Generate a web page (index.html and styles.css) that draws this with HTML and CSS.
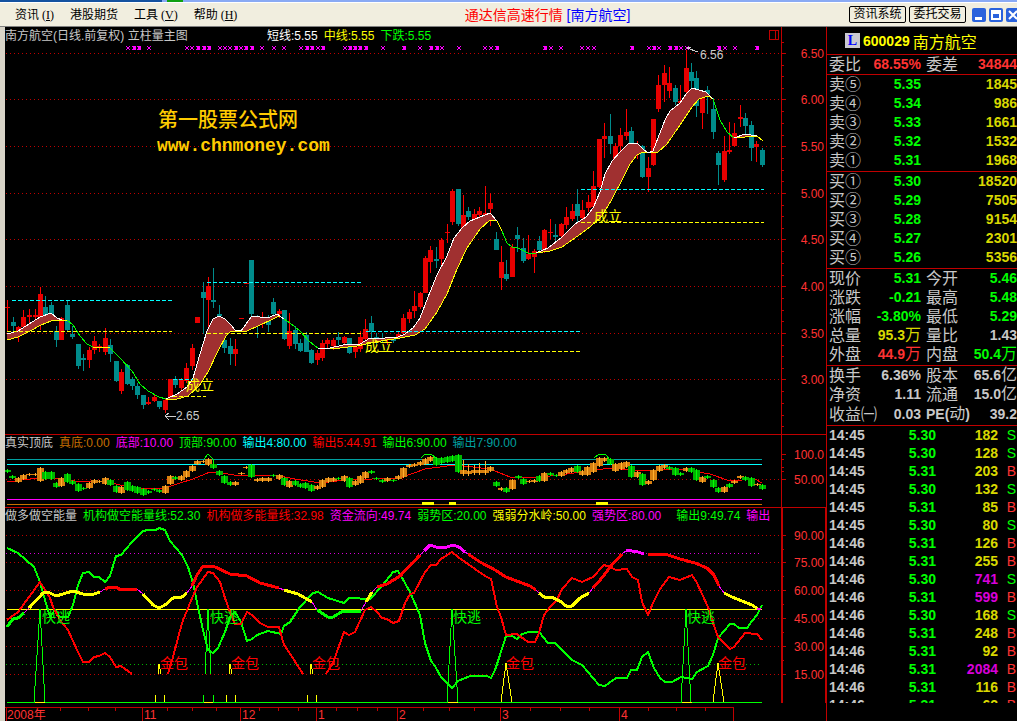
FILE: index.html
```html
<!DOCTYPE html>
<html lang="zh-CN">
<head>
<meta charset="utf-8">
<title>通达信高速行情[南方航空]</title>
<link rel="stylesheet" href="styles.css">
</head>
<body>
<header class="top">
  <div class="strip"><i class="strip-dark"></i><i class="strip-green"></i></div>
  <div class="bar">
    <nav class="menu">
      <button type="button">资讯 (<u>I</u>)</button>
      <button type="button">港股期货</button>
      <button type="button">工具 (<u>V</u>)</button>
      <button type="button">帮助 (<u>H</u>)</button>
    </nav>
    <h1 class="title"><span class="t-red">通达信高速行情</span> <span class="t-blue">[南方航空]</span></h1>
    <div class="actions">
      <button type="button" class="box">资讯系统</button>
      <button type="button" class="box">委托交易</button>
      <div class="win">
        <button type="button" aria-label="最小化"><svg viewBox="0 0 14 14"><path d="M3 9h7v3H3z" fill="#fff"/></svg></button>
        <button type="button" aria-label="还原"><svg viewBox="0 0 14 14"><path d="M3 3h8v8H3zM3 5h8" fill="none" stroke="#fff" stroke-width="2"/></svg></button>
        <button type="button" aria-label="关闭"><svg viewBox="0 0 14 14"><path d="M3 3l8 8M11 3l-8 8" fill="none" stroke="#fff" stroke-width="2"/></svg></button>
      </div>
    </div>
  </div>
</header>
<main class="work">
  <div class="charts">
    <section class="panel">
      <svg id="price" viewBox="5 27 821 407"></svg>
      <div class="legend">
        <span class="c-grey wide">南方航空(日线.前复权) 立柱量主图</span>
        <span class="c-white">短线:5.55</span><span class="c-yellow">中线:5.55</span><span class="c-green">下跌:5.55</span>
      </div>
    </section>
    <section class="panel">
      <svg id="osc" viewBox="5 434 821 73"></svg>
      <div class="legend">
        <span class="c-grey">真实顶底</span><span class="c-orange">真底:0.00</span><span class="c-mag">底部:10.00</span><span class="c-green">顶部:90.00</span><span class="c-cyan">输出4:80.00</span><span class="c-red">输出5:44.91</span><span class="c-green">输出6:90.00</span><span class="c-teal">输出7:90.00</span>
      </div>
    </section>
    <section class="panel">
      <svg id="energy" viewBox="5 507 821 196"></svg>
      <div class="legend">
        <span class="c-grey">做多做空能量</span><span class="c-green">机构做空能量线:52.30</span><span class="c-red">机构做多能量线:32.98</span><span class="c-mag">资金流向:49.74</span><span class="c-green">弱势区:20.00</span><span class="c-yellow">强弱分水岭:50.00</span><span class="c-mag far">强势区:80.00</span><span class="c-green">输出9:49.74</span><span class="c-mag">输出</span>
      </div>
    </section>
    <svg id="time" viewBox="5 703 821 18"></svg>
  </div>
  <aside class="side">
    <h2 class="stock"><span class="flag">L</span><b>600029</b> 南方航空</h2>
    <table class="stats first">
      <tr><th>委比</th><td class="r">68.55%</td><th>委差</th><td class="r">34844</td></tr>
    </table>
    <table class="book">
      <tr><th>卖⑤</th><td>5.35</td><td>1845</td></tr>
      <tr><th>卖④</th><td>5.34</td><td>986</td></tr>
      <tr><th>卖③</th><td>5.33</td><td>1661</td></tr>
      <tr><th>卖②</th><td>5.32</td><td>1532</td></tr>
      <tr><th>卖①</th><td>5.31</td><td>1968</td></tr>
    </table>
    <table class="book">
      <tr><th>买①</th><td>5.30</td><td>18520</td></tr>
      <tr><th>买②</th><td>5.29</td><td>7505</td></tr>
      <tr><th>买③</th><td>5.28</td><td>9154</td></tr>
      <tr><th>买④</th><td>5.27</td><td>2301</td></tr>
      <tr><th>买⑤</th><td>5.26</td><td>5356</td></tr>
    </table>
    <table class="stats">
      <tr><th>现价</th><td class="g">5.31</td><th>今开</th><td class="g">5.46</td></tr>
      <tr><th>涨跌</th><td class="g">-0.21</td><th>最高</th><td class="g">5.48</td></tr>
      <tr><th>涨幅</th><td class="g">-3.80%</td><th>最低</th><td class="g">5.29</td></tr>
      <tr><th>总量</th><td class="y">95.3<span>万</span></td><th>量比</th><td>1.43</td></tr>
      <tr><th>外盘</th><td class="r">44.9<span>万</span></td><th>内盘</th><td class="g">50.4<span>万</span></td></tr>
    </table>
    <table class="stats">
      <tr><th>换手</th><td>6.36%</td><th>股本</th><td>65.6<span>亿</span></td></tr>
      <tr><th>净资</th><td>1.11</td><th>流通</th><td>15.0<span>亿</span></td></tr>
      <tr><th>收益㈠</th><td>0.03</td><th class="pe"><b>PE(</b>动<b>)</b></th><td>39.2</td></tr>
    </table>
    <div class="ticks">
      <table>
        <tr><th>14:45</th><td>5.30</td><td>182</td><td class="g">S</td></tr>
        <tr><th>14:45</th><td>5.30</td><td>128</td><td class="g">S</td></tr>
        <tr><th>14:45</th><td>5.31</td><td>203</td><td class="r">B</td></tr>
        <tr><th>14:45</th><td>5.30</td><td>132</td><td class="g">S</td></tr>
        <tr><th>14:45</th><td>5.31</td><td>85</td><td class="r">B</td></tr>
        <tr><th>14:45</th><td>5.30</td><td>80</td><td class="g">S</td></tr>
        <tr><th>14:46</th><td>5.31</td><td>126</td><td class="r">B</td></tr>
        <tr><th>14:46</th><td>5.31</td><td>255</td><td class="r">B</td></tr>
        <tr><th>14:46</th><td>5.30</td><td class="m">741</td><td class="g">S</td></tr>
        <tr><th>14:46</th><td>5.31</td><td class="m">599</td><td class="r">B</td></tr>
        <tr><th>14:46</th><td>5.30</td><td>168</td><td class="g">S</td></tr>
        <tr><th>14:46</th><td>5.31</td><td>248</td><td class="r">B</td></tr>
        <tr><th>14:46</th><td>5.31</td><td>92</td><td class="r">B</td></tr>
        <tr><th>14:46</th><td>5.31</td><td class="m">2084</td><td class="r">B</td></tr>
        <tr><th>14:46</th><td>5.31</td><td>116</td><td class="r">B</td></tr>
        <tr><th>14:46</th><td>5.31</td><td>62</td><td class="r">B</td></tr>
      </table>
    </div>
  </aside>
</main>
<script src="charts.js"></script>
</body>
</html>
```
FILE: styles.css
```css
* { box-sizing: border-box; }
body {
  margin: 0;
  background: #000;
  font-family: "Liberation Sans", "Noto Sans CJK SC", sans-serif;
  font-size: 12px;
  overflow: hidden;
}
button { font: inherit; padding: 0; border: 0; background: none; color: #000; }
.top { background: #f1eedf; border-bottom: 1px solid #808080; }
.strip { display: flex; height: 2px; background: #8aaaf4; }
.strip-dark { width: 162px; background: #1452a0; }
.strip-green { width: 16px; margin-left: 5px; background: #10a010; }
.bar {
  display: grid;
  grid-template-columns: 1fr auto 1fr;
  align-items: center;
  height: 24px;
  border-top: 1px solid #fff;
}
.menu { display: flex; gap: 16px; padding-left: 15px; font-family: "Liberation Serif", "Noto Sans CJK SC", serif; line-height: 18px; }
.title { margin: 0 0 0 78px; font-size: 14px; font-weight: 400; line-height: 20px; white-space: nowrap; }
.t-red { color: #f00; }
.t-blue { color: #00f; }
.actions { display: flex; justify-content: flex-end; align-items: center; gap: 3px; overflow: hidden; }
.box { width: 57px; height: 17px; line-height: 15px; border: 1px solid #000; border-radius: 2px; }
.win { display: flex; gap: 3px; margin: 0 -3px 0 3px; }
.win button { width: 14px; height: 14px; border-radius: 2px; background: #2a62dc; }
.win svg { display: block; }

.work { display: grid; grid-template-columns: minmax(0, 1fr) 191px; }
.charts { border-left: 5px solid #d8d4c8; }
.charts svg { display: block; width: 100%; }
.panel { display: grid; }
.panel > * { grid-area: 1 / 1; }
.legend {
  display: flex;
  gap: 6px;
  align-self: start;
  width: 94%;
  overflow: hidden;
  white-space: nowrap;
  line-height: 19px;
}
.wide { min-width: 256px; }
.far { margin-right: 9px; }
.c-grey { color: #c8c8c8; }
.c-white { color: #fff; }
.c-yellow { color: #ff0; }
.c-green { color: #0f0; }
.c-orange { color: #c87000; }
.c-mag { color: #f0f; }
.c-cyan { color: #0ff; }
.c-red { color: #f00; }
.c-teal { color: #00a0a0; }
svg text { font-size: 12px; }
svg .mark { font-size: 14px; }
svg .brand { font-size: 20px; font-weight: 500; fill: #fc0; }
svg .site { font: bold 18px "Liberation Mono", monospace; fill: #fc0; }

.side { border-left: 1px solid #c00000; color: #c8c8c8; overflow: hidden; }
.stock {
  display: flex;
  align-items: center;
  gap: 3px;
  height: 27px;
  margin: 0;
  padding-left: 18px;
  font-size: 16px;
  font-weight: 400;
  color: #ff0;
}
.stock b { font-size: 14px; }
.flag { width: 15px; height: 15px; background: #c8c8d0; color: #00f; font: bold 14px/15px "Liberation Serif", serif; text-align: center; }
table { width: 100%; border-collapse: separate; border-spacing: 0; table-layout: fixed; }
.stats, .book, .ticks { border-top: 1px solid #c00000; padding-bottom: 1px; }
.first { padding-bottom: 0; }
th, td { padding: 0; height: 19px; line-height: 19px; white-space: nowrap; }
th { padding-left: 2px; font-size: 16px; font-weight: 400; text-align: left; }
td { font-size: 14px; font-weight: 700; text-align: right; }
td span { font-size: 16px; font-weight: 400; line-height: 16px; }
.stats th:nth-child(1) { width: 40px; }
.stats td:nth-child(2) { width: 54px; }
.stats th:nth-child(3) { width: 42px; padding-left: 5px; }
.pe b { font-size: 14px; }
.book th { width: 40px; }
.book td:nth-child(2) { width: 54px; color: #0f0; }
.book td:nth-child(3) { color: #d8d800; }
.ticks { max-height: 278px; overflow: hidden; }
.ticks th, .ticks td { height: 18px; line-height: 18px; font-size: 14px; font-weight: 700; }
.ticks th { width: 56px; }
.ticks td:nth-child(2) { width: 53px; color: #0f0; }
.ticks td:nth-child(3) { width: 62px; color: #d8d800; }
.ticks td:nth-child(4) { padding-right: 1px; font-weight: 400; }
.side .g { color: #0f0; }
.side .r { color: #ff3232; }
.side .y { color: #d8d800; }
.side .ticks .m { color: #d800d8; }
```
FILE: charts.js
```js
const RED = '#c00000', TEXT = '#ff3232', TEAL = '#008c8c';
const AX = 781, END = 762;

const line = (x1, y1, x2, y2, c, extra = '') =>
  `<path d="M${x1} ${y1}L${x2} ${y2}" stroke="${c}" fill="none" ${extra}/>`;
const rect = (x, y, w, h, c) => `<rect x="${x}" y="${y}" width="${w}" height="${h}" fill="${c}"/>`;
const curve = (pts, c, w = 1) =>
  `<polyline points="${pts}" stroke="${c}" stroke-width="${w}" fill="none" stroke-linejoin="round"/>`;
const text = (x, y, s, c, cls = '', anchor = 'start') =>
  `<text x="${x}" y="${y}" fill="${c}" class="${cls}" text-anchor="${anchor}">${s}</text>`;
const crisp = s => `<g shape-rendering="crispEdges">${s}</g>`;
const dots = (y, c = RED, to = AX) => line(6, y + .5, to, y + .5, c, 'stroke-dasharray="1 3"');
const dash = (a, b, y, c) => line(a, y + .5, b, y + .5, c, 'stroke-dasharray="4 2"');
const axis = (levels, minor) => levels.map(([y, s]) =>
  line(AX, y + .5, AX + 5, y + .5, RED) + text(824, y + 5, s, TEXT, '', 'end')).join('') +
  minor.map(y => line(AX, y + .5, AX + 3, y + .5, RED)).join('');

/* Daily candles: x, high, body top, body bottom, low, direction */
const candles = `7 300 307 308 331 r|13 317 322 326 331 t|18 326 327 331 342 r|23 310 317 327 327 r|29 309 315 317 323 r
35 309 315 317 320 r|40 287 294 317 330 r|45 296 307 315 318 t|51 302 305 314 318 t|56 326 331 340 347 t
61 317 318 340 340 r|67 301 305 330 332 t|72 326 334 337 339 t|78 344 344 366 369 t|83 354 358 360 371 t
89 347 350 360 368 r|94 336 341 350 354 r|99 344 346 347 352 r|105 328 338 352 355 r|110 339 345 354 362 t
116 361 361 381 382 t|121 369 372 391 394 r|127 364 365 384 385 t|132 377 379 386 390 t|137 383 386 395 399 t
143 395 395 405 409 t|148 397 402 404 405 r|154 394 397 401 402 r|159 401 401 407 409 t|165 399 400 410 413 r
170 379 379 397 399 r|175 376 379 385 388 t|181 378 380 388 390 r|186 363 368 381 383 r|192 344 348 366 370 r
197 317 317 323 323 r|203 282 292 298 334 t|208 277 286 300 330 r|213 268 300 302 308 t|219 305 314 316 319 t
224 340 340 348 353 t|230 338 346 354 365 t|235 339 349 354 366 r|241 318 318 319 319 r|246 283 283 284 284 r
251 260 260 314 318 t|257 315 320 322 338 t|262 312 317 319 328 r|268 315 320 325 332 t|273 298 302 314 317 t
279 309 311 314 318 r|284 310 310 339 340 t|289 313 331 346 349 r|295 326 330 344 349 t|300 339 343 351 352 t
306 332 335 352 352 t|311 349 350 363 364 t|317 350 353 360 365 r|322 340 343 358 361 r|327 338 340 344 348 r
333 338 340 346 350 r|338 332 337 340 345 t|344 336 337 343 347 r|349 338 338 353 354 t|355 345 347 352 358 r
360 331 337 349 352 r|365 319 329 339 342 r|371 316 323 332 340 t|376 333 337 338 345 t|382 333 338 339 343 t
387 337 339 340 345 r|393 337 339 341 343 t|398 332 334 337 339 r|403 314 318 333 335 r|409 309 312 319 323 r
414 291 306 311 318 r|420 292 293 307 309 r|425 256 258 293 293 r|430 246 250 262 273 r|436 247 259 261 268 t
441 238 240 259 268 r|447 224 232 233 243 r|452 189 191 222 225 r|458 189 189 224 226 t|463 195 215 228 230 r
468 207 211 217 220 t|474 209 214 219 220 r|479 207 211 215 217 r|485 186 213 215 217 r|490 193 203 209 226 r
496 232 239 250 250 t|501 246 262 278 290 r|506 260 274 279 281 t|512 244 247 277 277 r|517 227 235 239 252 t
523 238 248 261 263 t|528 235 254 259 260 r|534 249 251 257 273 r|539 236 241 250 252 t|544 229 230 250 253 r
550 219 232 233 239 r|555 224 235 237 242 t|561 223 224 236 238 r|566 207 217 225 229 r|572 204 211 219 221 r
577 189 204 216 223 t|582 200 210 218 222 r|588 195 202 208 212 r|593 171 186 207 210 r|599 139 139 187 188 r
604 123 136 139 158 r|610 114 136 144 154 t|615 143 146 159 161 r|620 128 135 146 154 r|626 109 132 136 140 r
631 127 131 143 145 t|637 141 145 153 159 r|642 145 146 177 178 t|648 157 168 177 192 r|653 119 119 165 166 r
658 75 85 109 112 r|664 65 73 85 102 r|669 67 83 91 98 r|675 85 88 102 105 t|680 85 101 103 105 r
686 50 68 92 93 r|691 63 72 81 90 t|696 71 78 106 117 t|702 90 95 113 129 r|707 86 90 94 114 t
713 98 109 132 139 t|718 151 153 165 185 t|724 136 151 180 182 r|729 122 150 152 154 r|734 123 133 146 147 r
740 105 117 119 127 r|745 113 118 126 136 t|751 121 125 148 161 t|756 141 144 147 162 r|762 148 150 165 167 t`
  .split(/[|\n]/).map(s => s.split(' '));

/* Bands between the short (white) and middle (yellow) averages */
const bands = [
  ['7,334 18,331 29,324 40,317 51,313 57,318 62,320', '7,340 18,337 30,331 41,325 51,321 62,320 68,320'],
  ['166,399 177,394 187,387 193,378 200,354 207,331 213,319 219,316 225,319 231,325 235,330 241,331 246,324 252,316 260,317 270,317 277,314 284,319',
   '166,399 177,399 188,396 199,386 208,372 218,351 226,336 231,331 247,331 258,326 273,319 279,316 284,319'],
  ['318,348 330,348 343,345 360,344 370,338 385,338 398,337 405,334 413,328 420,318 428,297 437,275 447,256 454,238 462,228 470,221 480,217 490,213 497,221',
   '318,348 340,348 357,346 375,342 400,338 415,335 425,329 437,312 447,294 457,269 467,248 480,229 490,220 497,221 502,231'],
  ['536,253 548,248 562,237 575,224 586,217 593,208 600,192 605,174 612,161 620,152 628,144 637,143 643,149 648,153 653,151 658,138 665,120 670,111 680,103 686,94 692,88 706,92 713,99',
   '536,253 550,251 562,247 575,238 590,227 602,216 612,199 622,180 630,164 637,155 643,152 658,152 667,144 680,125 692,107 699,99 708,96 713,99'],
  ['734,138 745,134 757,136', '734,138 745,137 757,136 763,141']
];
const falls = ['67,320 73,325 80,336 87,344 93,347', '110,348 120,358 132,371 140,384 148,391 159,397 166,399',
  '284,319 290,323 300,331 310,342 318,348', '502,231 507,243 512,247 518,248 528,253 536,253', '713,99 720,120 727,132 734,138'];
const crosses = [128, 134, 139, 149, 187, 192, 198, 204, 209, 220, 225, 230, 236, 241, 246, 252, 262, 274, 284, 301, 307, 312, 318, 323,
  345, 350, 355, 360, 366, 383, 404, 420, 431, 437, 442, 459, 485, 491, 497, 545, 551, 561, 582, 588, 594, 632, 649, 654, 659, 670, 676, 681, 687, 719, 725, 735, 757];
const heavy = new Set([134, 139, 198, 204, 209, 236, 246, 252, 307, 312, 323, 350, 355, 360, 366, 404, 431, 437, 497, 545, 632, 654, 670, 676, 719, 757]);
const levels = [[53, '6.50'], [99, '6.00'], [146, '5.50'], [193, '5.00'], [239, '4.50'], [286, '4.00'], [333, '3.50'], [379, '3.00']];

let s = levels.map(l => dots(l[0])).join('');
s += candles.map(([x, h, a, b, l, c]) => {
  x = +x; const k = c === 'r' ? '#f00' : TEAL;
  return rect(x, +h, 1, l - h, k) + rect(x - 2, +a, 5, Math.max(1, b - a), c === 'r' ? '#e80000' : TEAL);
}).join('');
s += bands.map(([u, d]) => `<polygon points="${u} ${d.split(' ').reverse().join(' ')}" fill="#a03030"/>` +
  curve(d, '#ff0', 1) + curve(u, '#fff', 1)).join('');
s += curve('93,347 110,348', '#ff0') + falls.map(f => curve(f, '#0f0')).join('');
s += dash(12, 172, 300, '#0ff') + dash(7, 172, 331, '#ff0') + dash(207, 363, 282, '#0ff') + dash(207, 363, 333, '#ff0') +
  dash(366, 580, 331, '#0ff') + dash(366, 580, 351, '#ff0') + dash(581, 764, 189, '#0ff') + dash(581, 764, 222, '#ff0') +
  dash(173, 193, 379, '#0ff') + dash(173, 206, 396, '#ff0');
s += crosses.map(x => `<path d="M${x - 2} 46l4 4M${x + 2} 46l-4 4" stroke="#f0f" fill="none"/>` +
  (heavy.has(x) ? rect(x - 1, 46, 3, 4, '#f0f') : '')).join('');
s += line(AX + .5, 27, AX + .5, 434, RED) + line(687, 48, 698, 52, '#ccc') + line(687, 48, 691, 47, '#ccc') +
  line(165, 416.5, 176, 416.5, '#ccc') + curve('169,413 165,416 169,420', '#ccc') +
  '<path d="M769.5 30.5h9v9h-9zM775.5 30.5v9" fill="none" stroke="#c00000"/>';
const minors = [];
for (let y = 41.5; y < 428; y += 11.66) if (!levels.some(l => Math.abs(l[0] - y) < 4)) minors.push(Math.round(y));
document.getElementById('price').innerHTML = crisp(s + axis(levels, minors)) +
  text(158, 127, '第一股票公式网', '#fc0', 'brand') + text(157, 151, 'www.chnmoney.com', '#fc0', 'site') +
  text(700, 59, '6.56', '#ccc') + text(176, 420, '2.65', '#ccc') +
  [[186, 390], [365, 351], [594, 221]].map(p => text(p[0], p[1], '成立', '#ff0', 'mark')).join('');

/* Oscillator blocks: x, top, bottom, colour, optional wick top */
const blocks = `7 470 472 g|12 476 478 g|18 478 482 o|23 475 479 o|29 474 475 o|35 474 475 o|40 468 481 o|45 472 479 g|51 472 479 g
56 483 487 g|61 478 486 o|67 474 482 g|72 481 484 g|78 484 491 g|83 488 489 g|89 483 488 o|94 480 483 o|99 481 482 o|105 478 484 o
110 480 485 g|116 486 492 g|121 487 493 o|127 482 490 g|132 486 491 g|137 487 493 g|143 489 495 g|148 491 493 g|154 489 490 g
159 490 492 g|165 486 493 o|170 476 484 o|175 477 479 g|181 476 480 o|186 471 477 o|192 466 471 o|197 461 464 o|203 461 462 o
208 459 465 o|213 464 468 g|219 471 475 g|224 476 483 g|230 482 485 g|235 482 485 o|241 473 474 o|246 467 468 o|251 465 477 g
257 479 481 o|262 478 481 o|268 478 481 o|273 475 476 g|279 475 479 o|284 478 485 g|289 481 487 o|295 481 485 g|300 484 487 g
305 483 488 g|311 485 491 g|317 486 489 o|322 480 487 o|328 478 482 o|333 478 481 o|338 478 479 g|344 476 481 o|349 478 487 g
355 481 485 o|360 476 483 o|365 472 478 o|371 471 473 g|376 478 479 g|382 480 482 g|387 478 481 o|393 480 481 g|398 476 479 o
403 468 477 o|409 465 467 o|414 464 466 o|420 462 465 o|425 459 464 o|430 457 461 o|436 458 465 g|441 458 463 g|447 457 462 g
452 456 461 g|458 455 472 g|463 470 474 o 460|468 471 474 o 464|474 470 473 o 465|479 470 473 o 463|485 470 473 o 461|490 467 471 o
496 482 486 g|501 488 490 o|506 488 492 g|512 480 489 o|518 476 478 g|523 479 484 g|529 481 482 o|534 480 482 o|539 476 481 g
544 473 481 o|550 473 475 g|556 475 476 g|561 472 476 o|566 470 473 o|571 468 472 o|577 466 472 g|582 471 475 o|587 467 475 o
593 463 472 o|599 458 466 o|604 458 461 o|610 459 464 g|615 464 471 o|621 463 469 o|626 462 467 o|631 466 477 g|637 472 477 o
642 474 485 g|648 481 484 o|653 470 480 o|659 466 471 o|664 465 468 o|669 467 469 g|675 468 475 g|680 473 475 g|686 468 471 o
691 468 472 g|696 470 480 g|702 477 482 o|707 476 478 g|713 480 487 g|718 488 492 g|724 487 492 o|729 484 487 g|734 481 483 o
740 476 478 o|745 477 480 g|751 478 486 g|757 484 485 o|762 485 489 g`.split(/[|\n]/).map(t => t.split(' '));
s = line(5, 434.5, 826, 434.5, RED) + dots(479) + line(7, 459.5, END, 459.5, '#00a0a0') + line(7, 464.5, END, 464.5, '#0ff') +
  line(7, 499.5, END, 499.5, '#f0f') + line(7, 504.5, END, 504.5, '#c87000');
s += curve('7,482 30,479 60,478 80,482 105,481 120,485 140,488 165,488 180,483 193,479 210,472 222,473 240,476 275,475 295,479 320,483 345,480 400,478 425,469 455,465 490,469 510,477 530,478 560,475 610,468 640,471 680,469 710,474 730,481 755,479 762,483', '#f00');
s += blocks.map(([x, a, b, c, w]) => {
  x = +x; const k = c === 'g' ? '#00b400' : '#d88010';
  return rect(x - 3, +a, 7, Math.max(1, b - a), k) + rect(x, w ? +w : a - 1, 1, b - (w || a) + 2, c === 'g' ? '#0f0' : '#ffb030');
}).join('');
s += curve('204,459 208,454 213,459 213,464', '#0f0') + curve('421,458 424,455 428,454 432,455 436,458', '#0f0') +
  curve('594,458 598,455 602,454 606,455 610,460', '#0f0') + rect(422, 502, 12, 3, '#ff0') + rect(449, 502, 7, 3, '#ff0') +
  rect(596, 502, 12, 3, '#ff0') + line(AX + .5, 434, AX + .5, 507, RED);
document.getElementById('osc').innerHTML = crisp(s + axis([[454, '100.0'], [479, '50.00']], [467, 459, 471]));

/* Energy panel: sentiment line in runs of one colour */
const runs = [
  ['7,627 13,619 18,618 24,613', '#0f0'], ['24,613 29,608', '#f0f', 1], ['29,608 43,593 48,592 56,596 73,591 83,594 94,594 100,592', '#ff0'],
  ['100,592 105,589', '#f0f', 1], ['105,589 110,587 116,587 121,590 137,589', '#f00'], ['137,589 143,594', '#f0f', 1],
  ['143,594 153,605 159,608 165,605 173,598 182,597 187,593', '#ff0'], ['187,593 192,586', '#f0f', 1],
  ['192,586 197,575 203,566 208,567 213,566 230,574 247,576 260,583 279,588', '#f00'], ['279,588 284,590', '#f0f', 1],
  ['284,590 298,594 312,602', '#ff0'], ['312,602 317,610', '#f0f', 1], ['317,610 328,617 333,617 343,611 361,611', '#0f0'],
  ['361,611 366,602', '#f0f', 1], ['366,602 372,592', '#ff0'], ['372,592 377,587', '#f0f', 1], ['377,587 387,584 400,576 420,555', '#f00'],
  ['420,555 424,551', '#f0f', 1], ['424,551 430,545 436,547 447,547 453,545 459,547 465,552', '#f0f'], ['465,552 468,554', '#f0f', 1],
  ['468,554 480,562 495,570 506,577 530,586 536,590', '#f00'], ['536,590 539,593', '#f0f', 1],
  ['539,593 544,597 551,597 560,601 566,606 572,606 580,598 589,593', '#ff0'], ['589,593 593,588', '#f0f', 1],
  ['593,588 601,579 611,566 622,554', '#f00'], ['622,554 626,551', '#f0f', 1], ['626,550 632,551 638,552 644,554', '#f0f'],
  ['648,554 665,554 680,559 695,563 707,568 714,575 719,586', '#f00'], ['719,586 724,593', '#f0f', 1], ['724,593 732,597 752,605 758,609', '#ff0'],
  ['757,609 761,609', '#f0f', 2]
];
const short = '7,548 18,553 34,567 40,582 45,600 50,617 55,610 60,617 68,617 73,605 78,585 83,573 89,572 94,577 99,577 105,582 110,576 116,556 121,555 132,542 143,531 148,530 156,530 159,528 165,530 170,541 182,555 188,567 193,583 198,607 203,630 208,650 213,653 218,648 225,632 230,617 235,612 241,622 247,641 252,639 257,635 268,631 281,634 284,626 290,622 300,607 313,593 318,592 328,598 344,603 349,598 370,599 382,586 393,572 398,571 401,576 410,592 420,615 425,643 431,661 435,666 441,677 452,688 458,681 470,676 487,676 491,678 495,670 500,655 506,636 512,636 517,639 522,634 529,632 539,632 548,643 555,643 572,660 582,665 599,685 605,686 616,678 627,678 631,670 637,670 642,657 648,652 654,668 660,678 665,682 672,682 681,677 692,679 697,672 708,666 713,655 718,638 730,624 734,624 739,628 747,628 752,621 757,615 762,605';
const long = ['7,620 18,612 29,597 40,582 45,590 50,598 53,607 60,620 68,630 78,652 83,662 89,662 94,657 99,656 105,653 110,657 116,667 121,666 132,674',
  '168,674 173,657 182,623 190,603 197,587 208,572 213,573 220,582 225,598 230,612 235,624 241,624 247,612 252,615 260,623 268,627 279,627 284,645 289,652 303,674',
  '326,674 333,663 344,632 349,635 355,632 365,610 371,607 377,612 382,618 387,619 393,623 399,621 405,603 410,594 414,593 425,572 431,565 436,565 441,559 452,552 458,557 485,576 491,579 497,607 501,617 506,635 517,634 528,642 535,642 539,633 544,615 550,607 557,600 562,589 572,578 582,582 593,577 604,565 610,567 616,570 627,569 632,577 638,580 642,602 648,615 653,603 660,589 669,577 680,580 692,575 697,583 708,607 713,623 718,637 730,649 734,647 745,633 757,634 762,640'];
const scale = [[535, '90.00'], [562, '75.00'], [590, '60.00'], [618, '45.00'], [646, '30.00'], [674, '15.00']];
s = line(5, 507.5, 826, 507.5, RED) + scale.map(l => dots(l[0])).join('') + dots(553, '#d800d8', END) + dots(664, '#00b400', END);
s += line(7, 702.5, END, 702.5, '#0f0') + line(7, 609.5, END, 609.5, '#ff0');
s += [[34, 40, 45], [447, 452, 458], [681, 686, 691]].map(p => curve(`${p[0]},702 ${p[1]},609 ${p[2]},702`, '#0f0') + rect(p[0] + 1, 702, 10, 1, '#ff0')).join('');
s += curve('205,674 208,609 211,674', '#0f0') + rect(203, 695, 1, 7, '#0f0') + rect(213, 695, 1, 7, '#0f0') + rect(204, 702, 9, 1, '#ff0');
s += [159, 230, 311].map(x => curve(`${x - 1},674 ${x},664 ${x + 2},674`, '#ff0') + line(x - 4, 702, x - 3, 695, '#ff0') + line(x + 5, 695, x + 6, 702, '#ff0')).join('');
s += curve('501,702 506,663 512,702', '#ff0') + curve('713,702 718,663 724,702', '#ff0');
s += curve(short, '#0f0', 2) + long.map(p => curve(p, '#f00', 2)).join('') + runs.map(([p, c, w]) => curve(p, c, w || 3)).join('');
s += line(782, 507, 782, 703, RED, 'stroke-width="2"') + line(825.5, 507, 825.5, 703, RED);
document.getElementById('energy').innerHTML = crisp(s + axis(scale, [549, 576, 604, 632, 660])) +
  [42, 210, 453, 687].map(x => text(x, 622, '快逃', '#0f0', 'mark')).join('') +
  [160, 231, 312, 506, 718].map(x => text(x, 668, '金包', '#f00', 'mark')).join('');

s = line(5, 707.5, 734, 707.5, RED) + [6, 142, 240, 316, 397, 500, 619, 733].map(x => line(x + .5, 707, x + .5, 721, RED)).join('') +
  [60, 88, 115, 167, 192, 216, 259, 278, 298, 336, 357, 377, 423, 449, 474, 530, 560, 589, 648, 676, 705].map(x => line(x + .5, 707, x + .5, 711, RED)).join('');
document.getElementById('time').innerHTML = crisp(s) +
  [[7, '2008年'], [144, '11'], [242, '12'], [318, '1'], [399, '2'], [502, '3'], [621, '4']].map(t => text(t[0], 719, t[1], TEXT)).join('');
```
